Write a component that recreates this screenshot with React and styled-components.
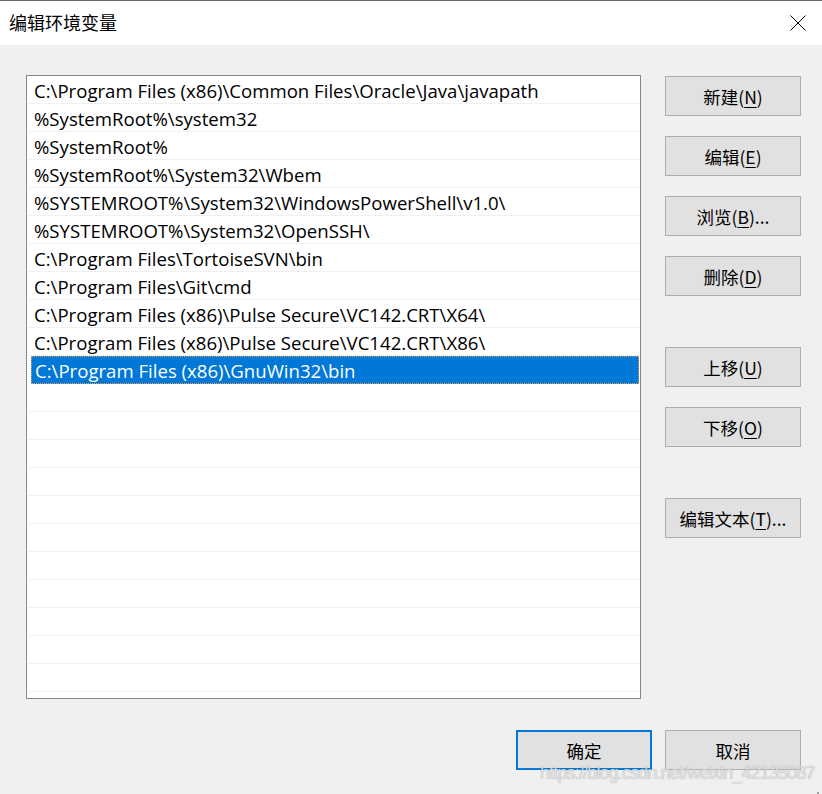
import React from 'react';
import styled, { createGlobalStyle } from 'styled-components';

const GlobalStyle = createGlobalStyle`
  html, body {
    margin: 0;
    padding: 0;
    background: #f0f0f0;
  }
  body {
    font-family: 'Open Sans', 'Noto Sans CJK SC', sans-serif;
  }
`;

const paths = [
  'C:\\Program Files (x86)\\Common Files\\Oracle\\Java\\javapath',
  '%SystemRoot%\\system32',
  '%SystemRoot%',
  '%SystemRoot%\\System32\\Wbem',
  '%SYSTEMROOT%\\System32\\WindowsPowerShell\\v1.0\\',
  '%SYSTEMROOT%\\System32\\OpenSSH\\',
  'C:\\Program Files\\TortoiseSVN\\bin',
  'C:\\Program Files\\Git\\cmd',
  'C:\\Program Files (x86)\\Pulse Secure\\VC142.CRT\\X64\\',
  'C:\\Program Files (x86)\\Pulse Secure\\VC142.CRT\\X86\\',
  'C:\\Program Files (x86)\\GnuWin32\\bin',
];

const EMPTY_ROWS = 12;

const Window = styled.div`
  position: relative;
  width: 822px;
  height: 794px;
  box-sizing: border-box;
  border-top: 1px solid #6a6a6a;
  background: #f0f0f0;
  overflow: hidden;
  display: flex;
  flex-direction: column;
`;

const TitleBar = styled.div`
  height: 44px;
  background: #ffffff;
  display: flex;
  align-items: center;
  justify-content: space-between;
  padding: 0 16px 0 9px;
  flex-shrink: 0;
`;

const Title = styled.span`
  font-family: 'Noto Sans CJK SC', sans-serif;
  font-size: 18px;
  color: #000;
  line-height: 1;
  margin-top: -2px;
`;

const CloseButton = styled.div`
  width: 16px;
  height: 16px;
  display: flex;
  margin-top: -1px;
`;

const Body = styled.div`
  display: flex;
  padding: 30px 21px 0 26px;
  gap: 24px;
`;

const ListBox = styled.div`
  width: 616px;
  height: 624px;
  box-sizing: border-box;
  border: 1px solid #828790;
  background: #ffffff;
  padding: 0 1px;
  overflow: hidden;
`;

const Row = styled.div`
  height: 28px;
  box-sizing: border-box;
  border-bottom: 1px solid ${p => (p.$selected ? '#0078d7' : '#f0f0f0')};
  background: ${p => (p.$selected ? '#0078d7' : 'transparent')};
  color: ${p => (p.$selected ? '#ffffff' : '#000000')};
  font-size: 18.6px;
  line-height: 29px;
  padding-left: ${p => (p.$selected ? '4px' : '6px')};
  margin-left: ${p => (p.$selected ? '3px' : '0')};
  outline: ${p => (p.$selected ? '1px dotted #e8a050' : 'none')};
  outline-offset: -1px;
  white-space: nowrap;
`;

const ButtonColumn = styled.div`
  display: flex;
  flex-direction: column;
  width: 136px;
  padding-top: 1px;
`;

const Group = styled.div`
  display: flex;
  flex-direction: column;
  gap: 20px;
  margin-bottom: ${p => p.$after || 0}px;
`;

const Button = styled.button`
  width: 136px;
  height: 40px;
  box-sizing: border-box;
  background: #e1e1e1;
  border: ${p => (p.$default ? '2px solid #0078d7' : '1px solid #adadad')};
  font-family: 'Noto Sans CJK SC', sans-serif;
  font-size: 17.5px;
  color: #000;
  padding: 0;
  display: flex;
  align-items: center;
  justify-content: center;
  cursor: default;
  u {
    text-decoration: underline;
    text-underline-offset: 3px;
  }
`;

const Footer = styled.div`
  display: flex;
  justify-content: flex-end;
  gap: 13px;
  padding: 31px 21px 0 0;
`;

const Watermark = styled.div`
  position: absolute;
  left: 540px;
  top: 762px;
  font-family: 'Liberation Sans', Arial, sans-serif;
  font-size: 18px;
  letter-spacing: -0.85px;
  color: rgba(255, 255, 255, 0.7);
  text-shadow: 0 0 1px rgba(110, 110, 110, 0.75);
  white-space: nowrap;
  pointer-events: none;
`;

const Grip = styled.div`
  position: absolute;
  right: 2px;
  bottom: 1px;
  width: 9px;
  height: 9px;
`;

function Label({ text, keyChar, suffix = '' }) {
  return (
    <span>
      {text}(<u>{keyChar}</u>){suffix}
    </span>
  );
}

export default function App() {
  return (
    <>
      <GlobalStyle />
      <Window>
        <TitleBar>
          <Title>编辑环境变量</Title>
          <CloseButton>
            <svg width="16" height="16" viewBox="0 0 16 16">
              <path d="M0.5 0.5 L15.5 15.5 M15.5 0.5 L0.5 15.5" stroke="#000" strokeWidth="1" fill="none" />
            </svg>
          </CloseButton>
        </TitleBar>
        <Body>
          <ListBox>
            {paths.map((p, i) => (
              <Row key={i} $selected={i === paths.length - 1}>{p}</Row>
            ))}
            {Array.from({ length: EMPTY_ROWS }).map((_, i) => (
              <Row key={'e' + i} />
            ))}
          </ListBox>
          <ButtonColumn>
            <Group $after={51}>
              <Button><Label text="新建" keyChar="N" /></Button>
              <Button><Label text="编辑" keyChar="E" /></Button>
              <Button><Label text="浏览" keyChar="B" suffix="..." /></Button>
              <Button><Label text="删除" keyChar="D" /></Button>
            </Group>
            <Group $after={51}>
              <Button><Label text="上移" keyChar="U" /></Button>
              <Button><Label text="下移" keyChar="O" /></Button>
            </Group>
            <Group>
              <Button><Label text="编辑文本" keyChar="T" suffix="..." /></Button>
            </Group>
          </ButtonColumn>
        </Body>
        <Footer>
          <Button $default>确定</Button>
          <Button>取消</Button>
        </Footer>
        <Watermark>https://blog.csdn.net/weixin_42135087</Watermark>
        <Grip>
          <svg width="9" height="9" viewBox="0 0 9 9">
            <rect x="6" y="0" width="2" height="2" fill="#a0a0a0" />
            <rect x="3" y="3" width="2" height="2" fill="#a0a0a0" />
            <rect x="6" y="3" width="2" height="2" fill="#a0a0a0" />
            <rect x="0" y="6" width="2" height="2" fill="#a0a0a0" />
            <rect x="3" y="6" width="2" height="2" fill="#a0a0a0" />
            <rect x="6" y="6" width="2" height="2" fill="#a0a0a0" />
          </svg>
        </Grip>
      </Window>
    </>
  );
}
